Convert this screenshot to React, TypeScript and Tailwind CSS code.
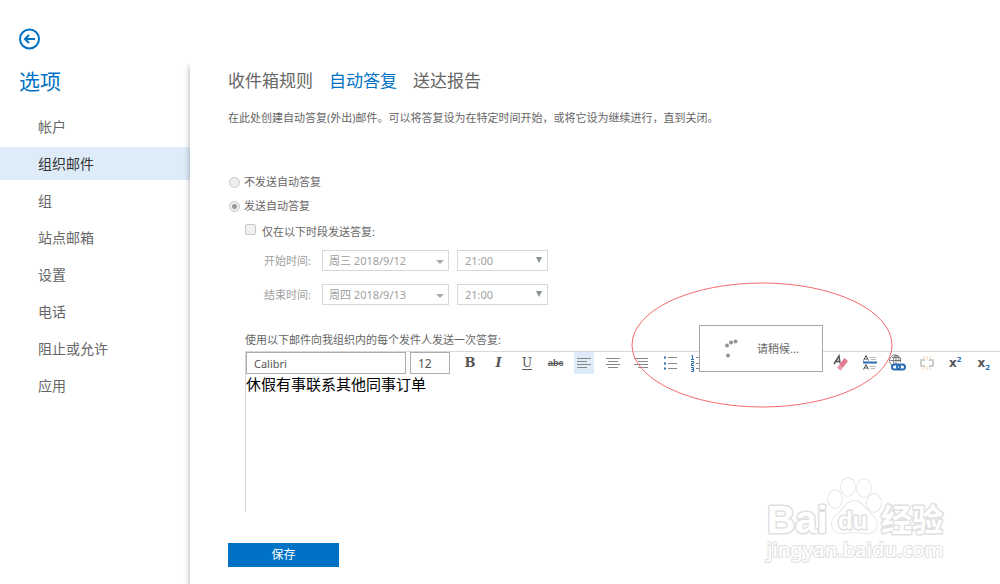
import type { ReactNode } from 'react';

const navItems = ['帐户', '组织邮件', '组', '站点邮箱', '设置', '电话', '阻止或允许', '应用'];
const tabs = ['收件箱规则', '自动答复', '送达报告'];
const periods = [
  { id: 'start', label: '开始时间:', date: '周三 2018/9/12', time: '21:00' },
  { id: 'end', label: '结束时间:', date: '周四 2018/9/13', time: '21:00' },
];

// paths drawn on a 20x20 grid
function Icon({ children }: { children: ReactNode }) {
  return (
    <svg viewBox="0 0 20 20" className="size-5" fill="none" stroke="#888" aria-hidden="true">
      {children}
    </svg>
  );
}

const tools: { name: string; active?: boolean; icon: ReactNode }[] = [
  { name: '加粗', icon: <span className="font-['DejaVu_Serif'] text-[13px] font-bold">B</span> },
  { name: '倾斜', icon: <span className="font-['DejaVu_Serif'] text-[13px] font-bold italic">I</span> },
  { name: '下划线', icon: <span className="font-['DejaVu_Serif'] text-[12px] underline underline-offset-2">U</span> },
  { name: '删除线', icon: <span className="font-['Liberation_Sans'] text-[9px] font-bold line-through">abc</span> },
  { name: '左对齐', active: true, icon: <Icon><path d="M3 5.5h14M3 8.5h10M3 11.5h14M3 14.5h10" /></Icon> },
  { name: '居中', icon: <Icon><path d="M3 5.5h14M5 8.5h10M3 11.5h14M5 14.5h10" /></Icon> },
  { name: '右对齐', icon: <Icon><path d="M3 5.5h14M7 8.5h10M3 11.5h14M7 14.5h10" /></Icon> },
  {
    name: '项目符号',
    icon: (
      <Icon>
        <path d="M8 4.5h9M8 10.5h9M8 15.5h9" />
        <path d="M4 4.5h2M4 10.5h2M4 15.5h2" stroke="#2a6db5" strokeWidth="2" />
      </Icon>
    ),
  },
  {
    name: '编号',
    icon: (
      <Icon>
        <path d="M8 4.5h9M8 10.5h9M8 15.5h9" />
        <path d="M3.5 2.5h1v4M3 6.5h3M3 8.5h2.5v2h-2v2h2.5M3 14.5h2.5v4h-2.5M3.5 16.5h2" stroke="#2a6db5" />
      </Icon>
    ),
  },
  { name: '减少缩进', icon: <Icon><path d="M3 5.5h14M9 8.5h8M9 11.5h8M3 14.5h14M6 8l-3 2 3 2" /></Icon> },
  { name: '增加缩进', icon: <Icon><path d="M3 5.5h14M9 8.5h8M9 11.5h8M3 14.5h14M3 8l3 2-3 2" /></Icon> },
  { name: '突出显示', icon: <Icon><path d="M4 12l8-8 3 3-8 8H4zM3 17.5h14" /></Icon> },
  { name: '字体颜色', icon: <Icon><path d="M6 13l4-10 4 10M8 9.5h4M4 16.5h12" /></Icon> },
  {
    name: '清除格式',
    icon: (
      <Icon>
        <path d="M3 11L8 3l1 7M5 8.5h4" stroke="#555" strokeWidth="1.5" />
        <path d="M8.500 12l5-6.500 3 2.500-5 6.500z" fill="#e27c91" stroke="#e27c91" />
        <path d="M7 13.500l3.500 3" stroke="#e897a8" strokeWidth="3" />
      </Icon>
    ),
  },
  {
    name: '行距',
    icon: (
      <Icon>
        <path d="M3.5 7.5L6 2.5l2.5 5M4.5 6h3M3.5 16.5L6 11.5l2.5 5M4.5 15h3" stroke="#555" />
        <path d="M9.5 4.5H16M10.5 6.5H16M9.5 13.5H16M10.5 15.5H15" stroke="#bbb" />
        <path d="M3 9.5h14" stroke="#2a6db5" strokeWidth="2" />
      </Icon>
    ),
  },
  {
    name: '插入超链接',
    icon: (
      <Icon>
        <path d="M4 12A5.500 5.500 0 1 1 12.500 9M2.500 7.500h10.500M4 4.500h7M8 2v9M8 2C5 4.500 5 8 6 11M8 2c3 2 3.500 4 2.500 7" stroke="#777" />
        <rect x="4" y="11.500" width="8" height="5" rx="2.500" stroke="#2a6db5" strokeWidth="2" />
        <rect x="9" y="11.500" width="8" height="5" rx="2.500" stroke="#2a6db5" strokeWidth="2" />
      </Icon>
    ),
  },
  {
    name: '删除超链接',
    icon: (
      <Icon>
        <path d="M8 7H4v6h4M12 7h4v6h-4" stroke="#ccc" strokeWidth="2" strokeLinejoin="round" />
        <path d="M10 3v4M6 3l2 3M14 3l-2 3M10 13v4M6 17l2-3M14 17l-2-3" stroke="#f8d2b0" />
      </Icon>
    ),
  },
  {
    name: '上标',
    icon: (
      <span className="flex items-start font-['DejaVu_Sans'] text-[12px] font-bold">
        x<span className="text-[7px] leading-[10px] text-[#2a6db5]">2</span>
      </span>
    ),
  },
  {
    name: '下标',
    icon: (
      <span className="flex items-end font-['DejaVu_Sans'] text-[12px] font-bold">
        x<span className="text-[7px] leading-[6px] text-[#2a6db5]">2</span>
      </span>
    ),
  },
];

function WaitDialog() {
  return (
    <div className="absolute -top-[27px] left-[453px] flex h-[47px] w-[124px] items-center border border-[#9fa9ad] bg-white" role="status">
      <svg viewBox="0 0 20 20" className="ml-[22px] size-5" fill="#949494" aria-hidden="true">
        <circle cx="13.500" cy="2.500" r="2" />
        <circle cx="9" cy="3.500" r="2" />
        <circle cx="5" cy="6.500" r="2" />
        <circle cx="6" cy="16.500" r="2" />
      </svg>
      <span className="ml-[15px] text-[11px] text-[#666]">请稍候...</span>
    </div>
  );
}

function Watermark() {
  return (
    <svg
      viewBox="0 0 190 96"
      className="pointer-events-none absolute right-[50px] bottom-[14px] h-24 w-[190px]"
      fill="#fff"
      stroke="#e0e0e0"
      strokeWidth="3"
      strokeLinejoin="round"
      paintOrder="stroke"
      aria-hidden="true"
    >
      <text x="7" y="59" fontSize="39" fontWeight="700" fontFamily="Liberation Sans, sans-serif">Bai</text>
      <g strokeWidth="1.500">
        <ellipse cx="75" cy="25" rx="7" ry="9" />
        <ellipse cx="88" cy="13" rx="7" ry="9" />
        <ellipse cx="104" cy="14" rx="7" ry="9" />
        <ellipse cx="114" cy="29" rx="7" ry="9" />
        <path d="M94 27c-7 0-9 6-14 11-5 4-9 8-8 13 1 7 7 9 13 8 6-1 13-1 19 0 6 1 12-1 13-8 0-6-4-9-8-13-5-5-8-11-15-11z" />
      </g>
      <text x="78" y="55" fontSize="24" fontWeight="700" fontFamily="Liberation Sans, sans-serif">du</text>
      <text x="121" y="57" fontSize="31" fontWeight="700" fontFamily="Noto Sans CJK SC, sans-serif">经验</text>
      <text x="7" y="83" fontSize="20" fontWeight="500" fontFamily="Noto Sans, sans-serif" strokeWidth="2">jingyan.baidu.com</text>
    </svg>
  );
}

export default function App() {
  return (
    <div className="relative flex min-h-screen flex-col overflow-hidden bg-white font-['Noto_Sans','Noto_Sans_CJK_SC',sans-serif] text-[#666]">
      <header className="flex h-[60px] items-end pb-[10px] pl-[18px]">
        <button type="button" aria-label="返回">
          <svg viewBox="0 0 22 22" className="size-[22px]" fill="none" stroke="#0072c6" strokeWidth="2" aria-hidden="true">
            <circle cx="11.500" cy="11" r="9.500" />
            <path d="M17 11H7M11 7L7 11l4 4" />
          </svg>
        </button>
      </header>

      <div className="flex flex-1">
        <aside className="w-[190px] shrink-0">
          <h1 className="mt-[5px] pl-[19px] text-[21px] leading-8 text-[#0072c6]">选项</h1>
          <nav className="mt-[13px] flex flex-col gap-1 text-[14px]">
            {navItems.map((item) => (
              <a
                key={item}
                href="#"
                className={`flex h-[33px] items-center pl-[38px] ${item === '组织邮件' ? 'bg-[#deecf9] text-[#333]' : ''}`}
              >
                {item}
              </a>
            ))}
          </nav>
        </aside>

        <main className="min-w-0 flex-1 bg-white pt-[10px] pl-[38px] text-[11px] leading-4 shadow-[-1px_6px_5px_rgba(0,0,0,0.25)]">
          <nav className="flex gap-4 text-[17px] leading-[22px]">
            {tabs.map((tab) => (
              <a key={tab} href="#" className={tab === '自动答复' ? 'text-[#0072c6]' : ''}>
                {tab}
              </a>
            ))}
          </nav>
          <p className="mt-[18px]">在此处创建自动答复(外出)邮件。可以将答复设为在特定时间开始，或将它设为继续进行，直到关闭。</p>

          <form>
            {/* reply mode */}
            <div className="mt-12 flex flex-col gap-2">
              <label className="flex items-center gap-1">
                <input type="radio" name="mode" className="ml-px size-[11px] appearance-none rounded-full border border-[#c8c8c8] bg-[#eee]" />
                不发送自动答复
              </label>
              <label className="flex items-center gap-1">
                <input
                  type="radio"
                  name="mode"
                  defaultChecked
                  className="ml-px size-[11px] appearance-none rounded-full border border-[#c8c8c8] bg-[radial-gradient(circle,#999_2px,#eee_3px)]"
                />
                发送自动答复
              </label>
            </div>
            <label className="mt-[10px] ml-[17px] flex items-start gap-[6px]">
              <input type="checkbox" className="size-[11px] appearance-none rounded-xs border border-[#c8c8c8] bg-[#f0f0f0]" />
              仅在以下时段发送答复:
            </label>

            {/* time range */}
            <div className="mt-[10px] flex flex-col gap-[13px] pl-9 text-[#a0a0a0]">
              {periods.map((p) => (
                <div key={p.id} className="flex items-center">
                  <label htmlFor={`${p.id}-date`} className="w-[58px]">
                    {p.label}
                  </label>
                  <div className="relative">
                    <select
                      id={`${p.id}-date`}
                      disabled
                      className="block h-[21px] w-[127px] appearance-none border border-[#d8d8d8] bg-white pl-[6px] text-[11px] leading-[19px] text-[#a0a0a0] opacity-100"
                    >
                      <option>{p.date}</option>
                    </select>
                    <svg viewBox="0 0 8 4" className="absolute top-[10px] right-[5px] h-1 w-2" fill="#aaa" aria-hidden="true">
                      <path d="M0 0h8L4 4z" />
                    </svg>
                  </div>
                  <div className="relative ml-2">
                    <select
                      aria-label={`${p.label}时刻`}
                      disabled
                      className="block h-[21px] w-[91px] appearance-none border border-[#d8d8d8] bg-white pl-[7px] text-[11px] leading-[19px] text-[#a0a0a0] opacity-100"
                    >
                      <option>{p.time}</option>
                    </select>
                    <svg viewBox="0 0 6 6" className="absolute top-[7px] right-[6px] size-[6px]" fill="#8a9296" aria-hidden="true">
                      <path d="M0 0h6L3 6z" />
                    </svg>
                  </div>
                </div>
              ))}
            </div>

            {/* message editor */}
            <label htmlFor="message" className="mt-[27px] ml-[17px] block">
              使用以下邮件向我组织内的每个发件人发送一次答复:
            </label>
            <div className="relative mt-[3px] ml-[17px] border-t border-l border-[#d8d8d8]">
              <div className="flex items-center text-[#555]">
                <input
                  aria-label="字体"
                  defaultValue="Calibri"
                  className="h-[22px] w-40 shrink-0 border border-[#a6b0b4] pl-[7px] text-[11px] text-[#555]"
                />
                <input
                  aria-label="字号"
                  defaultValue="12"
                  className="ml-1 h-[22px] w-10 shrink-0 border border-[#a6b0b4] pl-[7px] text-[12px] text-[#555]"
                />
                <div className="mr-[6px] ml-[10px] flex flex-1 justify-between">
                  {tools.map((tool) => (
                    <button
                      key={tool.name}
                      type="button"
                      aria-label={tool.name}
                      className={`flex h-[22px] w-5 items-center justify-center ${tool.active ? 'bg-[#deecf9]' : ''}`}
                    >
                      {tool.icon}
                    </button>
                  ))}
                </div>
              </div>
              <textarea
                id="message"
                defaultValue="休假有事联系其他同事订单"
                className="block h-[138px] w-full resize-none text-[15px] leading-5 text-black outline-none"
              />
              <WaitDialog />
              <svg viewBox="0 0 264 128" className="pointer-events-none absolute -top-[71px] left-[384px] h-32 w-[264px]" fill="none" stroke="#f56b6b" aria-hidden="true">
                <ellipse cx="132" cy="64" rx="130" ry="62" />
              </svg>
            </div>

            <button type="submit" className="mt-[31px] block h-6 w-[111px] bg-[#0072c6] text-[12px] text-white">
              保存
            </button>
          </form>
        </main>
      </div>
      <Watermark />
    </div>
  );
}
